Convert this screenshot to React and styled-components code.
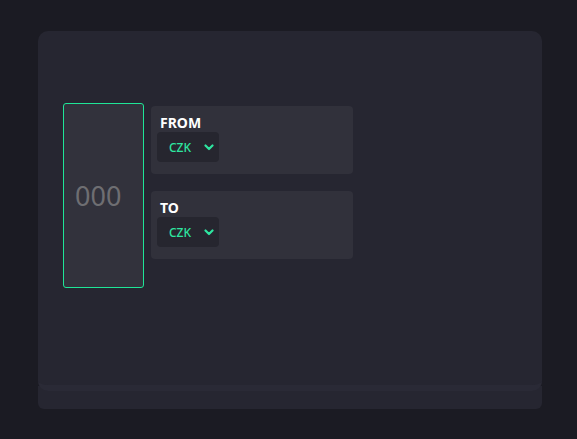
import React from "react";
import styled, { createGlobalStyle } from "styled-components";

const GlobalStyle = createGlobalStyle`
  html, body {
    margin: 0;
    background: #1b1b23;
    font-family: "Noto Sans", "Liberation Sans", sans-serif;
  }
`;

const Page = styled.div`
  padding: 31px 0 0 38px;
  width: 504px;
`;

const Card = styled.div`
  position: relative;
  z-index: 1;
  height: 282px;
  background: #262631;
  border-radius: 10px;
  border-bottom: 6px solid #2a2a36;
  padding: 72px 0 0 25px;
  box-sizing: content-box;
  display: flex;
  align-items: flex-start;
  gap: 7px;
`;

const Footer = styled.div`
  height: 23px;
  margin-top: -5px;
  background: #262631;
  border-radius: 0 0 6px 6px;
`;

const AmountBox = styled.div`
  width: 81px;
  height: 185px;
  box-sizing: border-box;
  background: #32323c;
  border: 1px solid #1fe597;
  border-radius: 3px;
  padding-left: 11px;
  display: flex;
  align-items: center;
  color: #6e6e72;
  font-family: "Noto Sans", sans-serif;
  font-size: 27px;
`;

const Fields = styled.div`
  display: flex;
  flex-direction: column;
  gap: 17px;
  padding-top: 3px;
`;

const Field = styled.div`
  width: 202px;
  height: 68px;
  box-sizing: border-box;
  background: #31313b;
  border-radius: 4px;
  padding: 7px 6px 0;
`;

const Label = styled.div`
  padding-left: 3px;
  color: #ffffff;
  font-weight: 700;
  font-size: 14px;
  line-height: 19px;
`;

const Select = styled.div`
  width: 62px;
  height: 30px;
  box-sizing: border-box;
  background: #26262f;
  border-radius: 4px;
  display: flex;
  align-items: center;
  justify-content: space-between;
  padding: 0 5px 0 12px;
  color: #2ee5a0;
  font-size: 12px;
  font-weight: 500;
`;

const Chevron = () => (
  <svg width="10" height="7" viewBox="0 0 10 7">
    <path d="M1.5 1.5 L5 5 L8.5 1.5" fill="none" stroke="#2ee5a0" strokeWidth="2.2" strokeLinecap="round" strokeLinejoin="round" />
  </svg>
);

const CurrencyField = ({ label, value }) => (
  <Field>
    <Label>{label}</Label>
    <Select>
      <span>{value}</span>
      <Chevron />
    </Select>
  </Field>
);

export default function App() {
  return (
    <Page>
      <GlobalStyle />
      <Card>
        <AmountBox>000</AmountBox>
        <Fields>
          <CurrencyField label="FROM" value="CZK" />
          <CurrencyField label="TO" value="CZK" />
        </Fields>
      </Card>
      <Footer />
    </Page>
  );
}
